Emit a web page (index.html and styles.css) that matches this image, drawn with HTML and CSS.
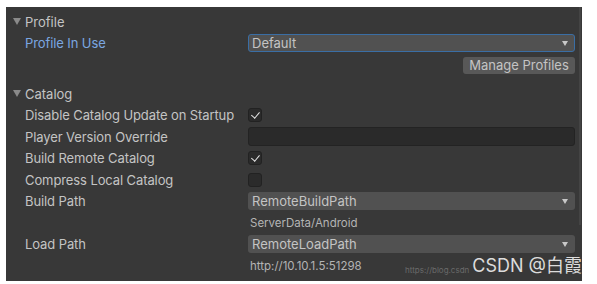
FILE: index.html
```html
<!DOCTYPE html>
<html lang="en">
<head>
    <meta charset="UTF-8">
    <title>Addressable Asset Settings</title>
    <link rel="stylesheet" href="styles.css">
</head>
<body>
    <div class="inspector">
        <div class="section-header"><span class="fold"></span>Profile</div>
        <div class="row">
            <div class="label active">Profile In Use</div>
            <div class="value">
                <div class="dropdown focused">Default<span class="arrow"></span></div>
            </div>
        </div>
        <div class="button-row">
            <button class="btn">Manage Profiles</button>
        </div>

        <div class="section-header"><span class="fold"></span>Catalog</div>
        <div class="row">
            <div class="label">Disable Catalog Update on Startup</div>
            <div class="value"><span class="checkbox checked"></span></div>
        </div>
        <div class="row">
            <div class="label">Player Version Override</div>
            <div class="value"><div class="text-field"></div></div>
        </div>
        <div class="row">
            <div class="label">Build Remote Catalog</div>
            <div class="value"><span class="checkbox checked"></span></div>
        </div>
        <div class="row">
            <div class="label">Compress Local Catalog</div>
            <div class="value"><span class="checkbox"></span></div>
        </div>
        <div class="row">
            <div class="label">Build Path</div>
            <div class="value">
                <div class="dropdown">RemoteBuildPath<span class="arrow"></span></div>
            </div>
        </div>
        <div class="row">
            <div class="label"></div>
            <div class="value hint">ServerData/Android</div>
        </div>
        <div class="row">
            <div class="label">Load Path</div>
            <div class="value">
                <div class="dropdown">RemoteLoadPath<span class="arrow"></span></div>
            </div>
        </div>
        <div class="row">
            <div class="label"></div>
            <div class="value hint">http://10.10.1.5:51298</div>
        </div>

        <div class="scrollbar"></div>
        <div class="watermark">
            <span class="wm-url">https://blog.csdn</span>
            <span class="wm-name">CSDN @白霞</span>
        </div>
    </div>
</body>
</html>
```

FILE: styles.css
```css
body {
    margin: 0;
    background-color: #ffffff;
    font-family: Inter, "Noto Sans", "Noto Sans CJK SC", sans-serif;
    font-size: 13px;
    color: #c4c4c4;
}
.inspector {
    position: relative;
    margin: 7px 0 0 6px;
    width: 576px;
    height: 274px;
    box-sizing: border-box;
    padding: 4px 7px 0 7px;
    background-color: #383838;
    overflow: hidden;
}
.section-header {
    display: flex;
    align-items: center;
    height: 21.5px;
}
.fold {
    width: 0;
    height: 0;
    border-left: 4px solid transparent;
    border-right: 4px solid transparent;
    border-top: 7px solid #8a8a8a;
    margin-right: 4px;
}
.row {
    display: flex;
    align-items: center;
    height: 21.5px;
}
.label {
    width: 235px;
    box-sizing: border-box;
    padding-left: 12px;
    flex-shrink: 0;
    white-space: nowrap;
    letter-spacing: -0.1px;
}
.label.active {
    color: #7ba7e1;
}
.value {
    flex: 1;
    display: flex;
    align-items: center;
}
.dropdown {
    position: relative;
    flex: 1;
    height: 18px;
    line-height: 18px;
    padding-left: 4px;
    background-color: #515151;
    border-radius: 3px;
    box-sizing: border-box;
}
.dropdown.focused {
    border: 1px solid #3a6ea5;
    line-height: 16px;
    padding-left: 3px;
}
.arrow {
    position: absolute;
    right: 7px;
    top: 7px;
    width: 0;
    height: 0;
    border-left: 3.5px solid transparent;
    border-right: 3.5px solid transparent;
    border-top: 5px solid #c8c8c8;
}
.dropdown.focused .arrow {
    top: 6px;
    right: 6px;
}
.button-row {
    display: flex;
    justify-content: flex-end;
    margin-top: 2.75px;
    margin-bottom: 9px;
}
.btn {
    height: 17px;
    width: 112px;
    padding: 0;
    border: none;
    border-radius: 3px;
    background-color: #585858;
    color: #c4c4c4;
    font-family: inherit;
    font-size: 13px;
    line-height: 17px;
}
.checkbox {
    position: relative;
    width: 14px;
    height: 14px;
    box-sizing: border-box;
    background-color: #2b2b2b;
    border: 1px solid #222222;
    border-radius: 3px;
}
.checkbox.checked::after {
    content: "";
    position: absolute;
    left: 3.5px;
    top: 1px;
    width: 3.5px;
    height: 7px;
    border-right: 1.8px solid #e4e4e4;
    border-bottom: 1.8px solid #e4e4e4;
    transform: rotate(40deg);
}
.text-field {
    flex: 1;
    height: 19px;
    background-color: #2a2a2a;
    border: 1px solid #232323;
    border-radius: 3px;
    box-sizing: border-box;
}
.hint {
    padding-left: 2px;
    font-size: 11.5px;
    color: #b4b4b4;
}
.scrollbar {
    position: absolute;
    right: 1px;
    top: 0;
    width: 2px;
    height: 218px;
    background-color: #444444;
}
.watermark {
    position: absolute;
    right: 0;
    bottom: 5px;
    display: flex;
    align-items: flex-end;
}
.wm-url {
    font-size: 8px;
    color: #6a6a6a;
    margin-right: 3px;
    margin-bottom: 1px;
}
.wm-name {
    font-size: 18px;
    line-height: 20px;
    color: #dcdcdc;
}
```
